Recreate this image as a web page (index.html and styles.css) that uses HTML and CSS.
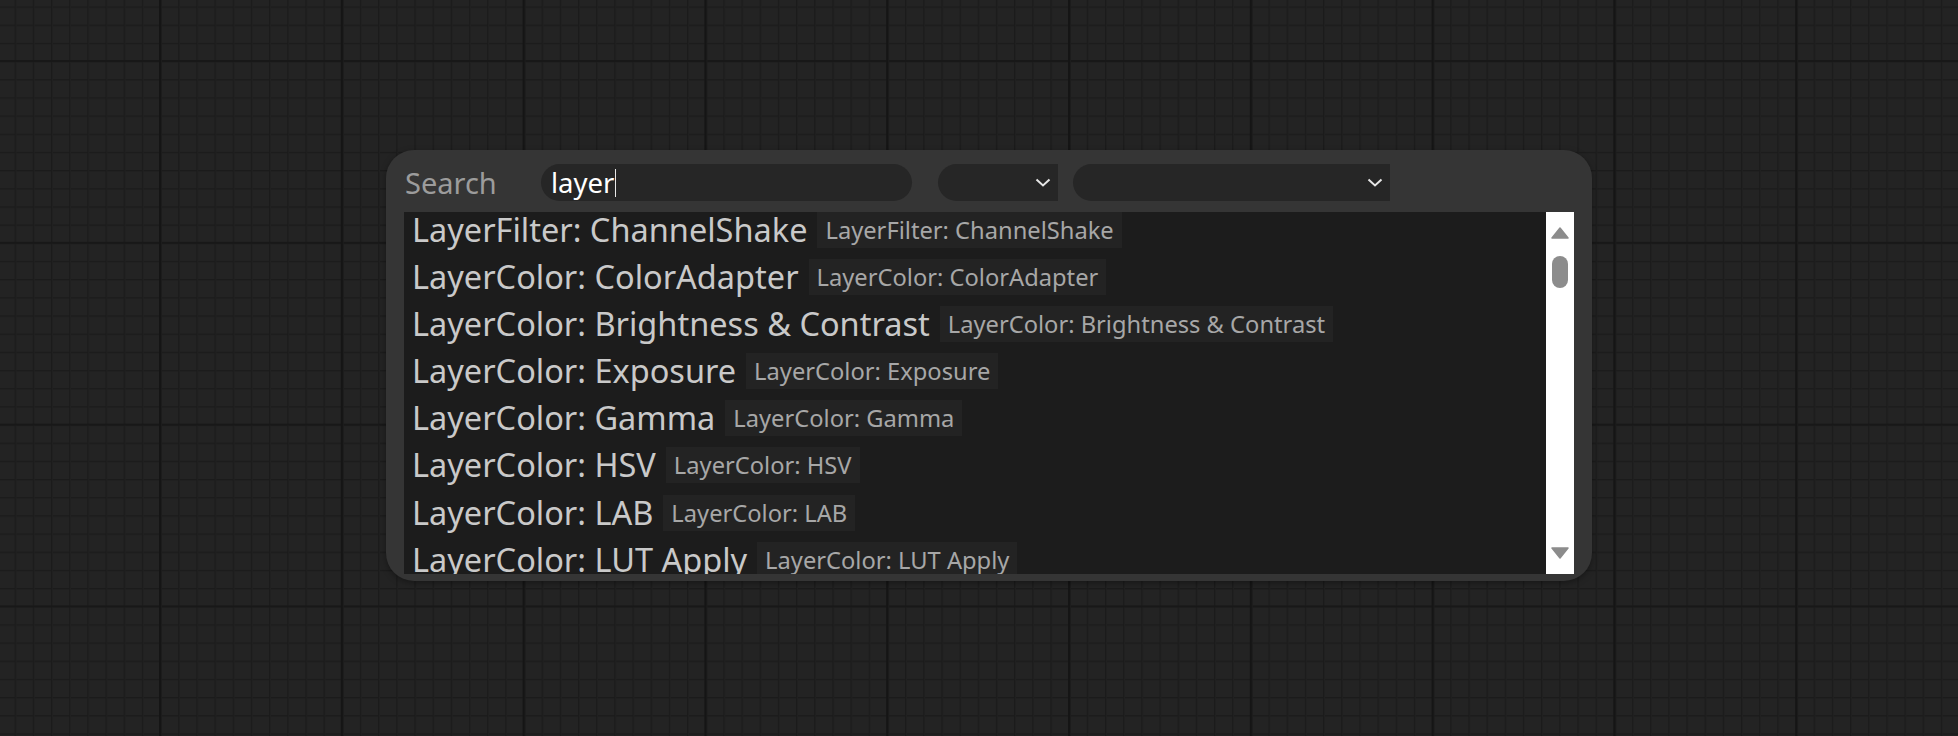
FILE: index.html
```html
<!DOCTYPE html>
<html lang="en">
<head>
<meta charset="utf-8">
<title>Search</title>
<link rel="stylesheet" href="styles.css">
</head>
<body>
<div class="canvas">
  <div class="searchbox">
    <div class="header">
      <span class="label">Search</span>
      <div class="input"><span class="query">layer</span><span class="caret"></span></div>
      <div class="select select-small">
        <svg class="chev" viewBox="0 0 16 9" width="16" height="9"><path d="M1.5 1.5 L8 7.5 L14.5 1.5" fill="none" stroke="#e6e6e6" stroke-width="2"/></svg>
      </div>
      <div class="select select-wide">
        <svg class="chev" viewBox="0 0 16 9" width="16" height="9"><path d="M1.5 1.5 L8 7.5 L14.5 1.5" fill="none" stroke="#e6e6e6" stroke-width="2"/></svg>
      </div>
    </div>
    <div class="helper">
      <div class="list">
        <div class="item"><span class="name">LayerFilter: ChannelShake</span><span class="tag">LayerFilter: ChannelShake</span></div>
        <div class="item"><span class="name">LayerColor: ColorAdapter</span><span class="tag">LayerColor: ColorAdapter</span></div>
        <div class="item"><span class="name">LayerColor: Brightness &amp; Contrast</span><span class="tag">LayerColor: Brightness &amp; Contrast</span></div>
        <div class="item"><span class="name">LayerColor: Exposure</span><span class="tag">LayerColor: Exposure</span></div>
        <div class="item"><span class="name">LayerColor: Gamma</span><span class="tag">LayerColor: Gamma</span></div>
        <div class="item"><span class="name">LayerColor: HSV</span><span class="tag">LayerColor: HSV</span></div>
        <div class="item"><span class="name">LayerColor: LAB</span><span class="tag">LayerColor: LAB</span></div>
        <div class="item"><span class="name">LayerColor: LUT Apply</span><span class="tag">LayerColor: LUT Apply</span></div>
      </div>
      <div class="scrollbar">
        <svg class="arrow" viewBox="0 0 18 12" width="18" height="12"><path d="M9 1 L17 11 L1 11 Z" fill="#8c8c8c" stroke="#8c8c8c" stroke-width="1.5" stroke-linejoin="round"/></svg>
        <div class="thumb"></div>
        <div class="spacer"></div>
        <svg class="arrow" viewBox="0 0 18 12" width="18" height="12"><path d="M1 1 L17 1 L9 11 Z" fill="#8c8c8c" stroke="#8c8c8c" stroke-width="1.5" stroke-linejoin="round"/></svg>
      </div>
    </div>
  </div>
</div>
</body>
</html>
```

FILE: styles.css
```css
html, body {
  margin: 0;
  padding: 0;
}
body {
  width: 1958px;
  height: 736px;
  overflow: hidden;
  font-family: "Noto Sans", "Open Sans", sans-serif;
}
.canvas {
  position: relative;
  width: 1958px;
  height: 736px;
  background-color: #232323;
  background-image:
    linear-gradient(to right, #151515 0 2px, #1c1c1c 2px 3px, transparent 3px),
    linear-gradient(to bottom, #181818 0 2px, transparent 2px),
    linear-gradient(to right, #1b1b1b 0 1px, #202020 1px 2px, transparent 2px),
    linear-gradient(to bottom, #1b1b1b 0 1px, #202020 1px 2px, transparent 2px);
  background-size: 181.8px 100%, 100% 181.8px, 18.18px 100%, 100% 18.18px;
  background-position: 159px 0, 0 60px, 160px 0, 0 61px;
}
.searchbox {
  position: absolute;
  left: 386px;
  top: 150px;
  width: 1206px;
  height: 431px;
  box-sizing: border-box;
  padding: 14px 18px 7px 18px;
  background: #353535;
  border-radius: 28px;
  display: flex;
  flex-direction: column;
  box-shadow: 0 2px 6px rgba(0,0,0,0.35);
}
.header {
  display: flex;
  align-items: center;
  height: 37px;
  flex: none;
}
.label {
  width: 137px;
  padding-left: 1px;
  box-sizing: border-box;
  color: #9c9c9c;
  font-size: 29px;
  line-height: 37px;
}
.input {
  width: 371px;
  height: 37px;
  box-sizing: border-box;
  background: #262626;
  border-radius: 18.5px;
  padding-left: 10px;
  display: flex;
  align-items: center;
  color: #ffffff;
  font-size: 27.5px;
}
.caret {
  display: inline-block;
  width: 1px;
  height: 28px;
  background: #e8e8e8;
  margin-left: 1px;
}
.select {
  height: 37px;
  box-sizing: border-box;
  background: #262626;
  border-radius: 18.5px 0 0 18.5px;
  display: flex;
  align-items: center;
  justify-content: flex-end;
  padding-right: 7px;
}
.select-small {
  width: 120px;
  margin-left: 26px;
}
.select-wide {
  width: 317px;
  margin-left: 15px;
}
.chev {
  display: block;
}
.helper {
  margin-top: 11px;
  height: 362px;
  display: flex;
  flex: none;
}
.list {
  flex: 1;
  background: #1c1c1c;
  overflow: hidden;
  padding-left: 8px;
}
.item {
  display: flex;
  align-items: center;
  height: 36px;
  margin-bottom: 11.1px;
  white-space: nowrap;
}
.name {
  color: #c9c9c9;
  font-size: 32.5px;
  line-height: 36px;
}
.tag {
  margin-left: 10px;
  padding: 0 8px;
  background: #232323;
  color: #a7a7a7;
  font-size: 23.7px;
  line-height: 36px;
}
.scrollbar {
  width: 28px;
  flex: none;
  background: #ffffff;
  display: flex;
  flex-direction: column;
  align-items: center;
  padding: 15px 0 15px 0;
  box-sizing: border-box;
}
.arrow {
  display: block;
  flex: none;
}
.thumb {
  margin-top: 17px;
  width: 16px;
  height: 32px;
  border-radius: 8px;
  background: #8c8c8c;
  flex: none;
}
.spacer {
  flex: 1;
}
```
